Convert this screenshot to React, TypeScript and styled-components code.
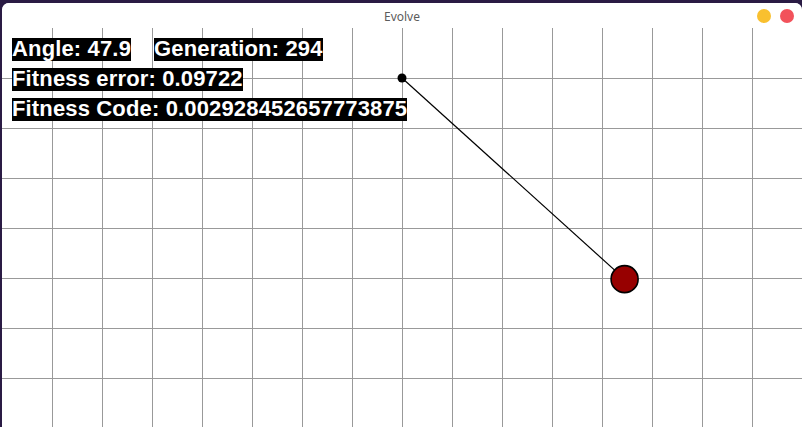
import React from "react";
import styled, { createGlobalStyle } from "styled-components";

const W = 800;
const H = 399;
const CELL = 50;
const PIVOT = { x: 400, y: 50 };
const LENGTH = 300;
const ANGLE = 47.9;

const App = () => {
  const rad = (ANGLE * Math.PI) / 180;
  const bob = {
    x: PIVOT.x + LENGTH * Math.sin(rad),
    y: PIVOT.y + LENGTH * Math.cos(rad),
  };
  const cols = [];
  for (let x = CELL; x < W; x += CELL) cols.push(x);
  const rows = [];
  for (let y = CELL; y < H; y += CELL) rows.push(y);

  return (
    <>
      <Global />
      <Window>
        <TitleBar>
          <span />
          <Title>Evolve</Title>
          <Controls>
            <Dot color="#f9c02f" />
            <Dot color="#f2525b" />
          </Controls>
        </TitleBar>
        <Canvas>
          <Scene width={W} height={H}>
            {cols.map((x) => (
              <line key={"c" + x} x1={x + 0.5} y1={0} x2={x + 0.5} y2={H} stroke="#999" strokeWidth={1} />
            ))}
            {rows.map((y) => (
              <line key={"r" + y} x1={0} y1={y + 0.5} x2={W} y2={y + 0.5} stroke="#999" strokeWidth={1} />
            ))}
            <line x1={PIVOT.x} y1={PIVOT.y} x2={bob.x} y2={bob.y} stroke="#000" strokeWidth={1.2} />
            <circle cx={PIVOT.x} cy={PIVOT.y} r={4.5} fill="#000" />
            <circle cx={bob.x} cy={bob.y} r={13.5} fill="#970000" stroke="#000" strokeWidth={1.6} />
          </Scene>
          <Hud>
            <HudRow>
              <Label>Angle: 47.9</Label>
              <Label>Generation: 294</Label>
            </HudRow>
            <HudRow>
              <Label>Fitness error: 0.09722</Label>
            </HudRow>
            <HudRow>
              <Label>Fitness Code: 0.002928452657773875</Label>
            </HudRow>
          </Hud>
        </Canvas>
      </Window>
    </>
  );
};
export default App;

const Global = createGlobalStyle`
  html, body {
    margin: 0;
    padding: 0;
    background: #2a1b44;
    overflow: hidden;
  }
`;
const Window = styled.div`
  margin: 3px 0 0 2px;
  width: 800px;
  height: 424px;
  background: #fff;
  border-radius: 7px 7px 0 0;
  overflow: hidden;
  display: flex;
  flex-direction: column;
`;
const TitleBar = styled.div`
  height: 25px;
  display: grid;
  grid-template-columns: 1fr auto 1fr;
  align-items: center;
  background: #fff;
`;
const Title = styled.div`
  font-family: "Noto Sans", "DejaVu Sans", sans-serif;
  font-size: 12px;
  color: #5c5c5c;
  padding-top: 1px;
`;
const Controls = styled.div`
  justify-self: end;
  display: flex;
  gap: 9px;
  padding-right: 8px;
  padding-top: 1px;
`;
const Dot = styled.span<{ color: string }>`
  width: 14px;
  height: 14px;
  border-radius: 50%;
  background: ${(p) => p.color};
`;
const Canvas = styled.div`
  position: relative;
  flex: 1;
  background: #fff;
`;
const Scene = styled.svg`
  display: block;
`;
const Hud = styled.div`
  position: absolute;
  top: 10px;
  left: 10px;
  display: flex;
  flex-direction: column;
  gap: 7px;
`;
const HudRow = styled.div`
  display: flex;
  gap: 23px;
`;
const Label = styled.span`
  background: #000;
  color: #fff;
  font-family: "Liberation Sans", Arial, sans-serif;
  font-weight: bold;
  font-size: 22px;
  line-height: 21px;
  letter-spacing: 0.15px;
  padding-bottom: 2px;
  white-space: nowrap;
`;
